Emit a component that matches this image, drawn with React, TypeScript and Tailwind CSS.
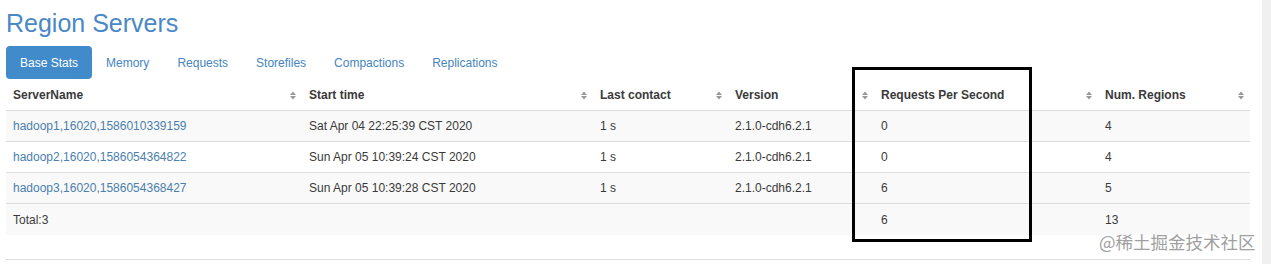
// Region Servers — HBase master UI, "Base Stats" tab with sortable table.
import React from "react";

const tabs = ["Base Stats", "Memory", "Requests", "Storefiles", "Compactions", "Replications"];

const columns = ["ServerName", "Start time", "Last contact", "Version", "Requests Per Second", "Num. Regions"];

const rows = [
  ["hadoop1,16020,1586010339159", "Sat Apr 04 22:25:39 CST 2020", "1 s", "2.1.0-cdh6.2.1", "0", "4"],
  ["hadoop2,16020,1586054364822", "Sun Apr 05 10:39:24 CST 2020", "1 s", "2.1.0-cdh6.2.1", "0", "4"],
  ["hadoop3,16020,1586054368427", "Sun Apr 05 10:39:28 CST 2020", "1 s", "2.1.0-cdh6.2.1", "6", "5"],
];

const grid = "grid grid-cols-[296px_291px_135px_146px_224px_152px]";

function SortIcon() {
  return (
    <svg width="6" height="9" viewBox="0 0 6 9" className="shrink-0">
      <polygon points="0,4 3,0.5 6,4" fill="#9a9a9a" />
      <polygon points="0,5 3,8.5 6,5" fill="#9a9a9a" />
    </svg>
  );
}

export default function App() {
  return (
    <div className="flex h-[264px] w-[1271px] overflow-hidden bg-white font-['Liberation_Sans',Arial,sans-serif] text-[12px] text-[#3a3a3a]">
      <div className="relative flex-1 pl-[6px]">
        <h1 className="mt-[8px] text-[25px] leading-[30px] text-[#4a88c6]">Region Servers</h1>

        <ul className="mt-[8px] flex">
          {tabs.map((t, i) => (
            <li
              key={t}
              className={`flex h-[33px] items-center rounded-[4px] px-[14px] ${
                i === 0 ? "bg-[#428bca] text-white" : "text-[#4585c0]"
              }`}
            >
              {t}
            </li>
          ))}
        </ul>

        <div className="mt-[1px] w-[1244px]">
          <div className={`${grid} h-[31px] border-b border-[#ddd] font-bold`}>
            {columns.map(c => (
              <div key={c} className="flex items-center justify-between pl-[7px] pr-[6px]">
                <span>{c}</span>
                <SortIcon />
              </div>
            ))}
          </div>
          {rows.map((r, i) => (
            <div
              key={r[0]}
              className={`${grid} h-[31px] border-b border-[#ddd] ${i % 2 === 0 ? "bg-[#f9f9f9]" : "bg-white"}`}
            >
              {r.map((v, j) => (
                <div key={j} className={`flex items-center pl-[7px] ${j === 0 ? "text-[#4a7fae]" : ""}`}>
                  {v}
                </div>
              ))}
            </div>
          ))}
          <div className={`${grid} h-[31px] bg-[#f9f9f9]`}>
            <div className="flex items-center pl-[7px]">Total:3</div>
            <div />
            <div />
            <div />
            <div className="flex items-center pl-[7px]">6</div>
            <div className="flex items-center pl-[7px]">13</div>
          </div>
          <div className="mt-[24px] border-b border-[#ddd]" />
        </div>

        {/* annotation box drawn over the RPS column */}
        <div className="absolute left-[852px] top-[67px] h-[175px] w-[180px] border-[3px] border-black" />

        <div className="absolute left-[1099px] top-[232px] font-['Noto_Sans_CJK_SC',sans-serif] text-[17.5px] leading-[20px] text-[#a0a0a0]">
          @稀土掘金技术社区
        </div>
      </div>
      <div className="w-[9px] bg-[#f0f0f0]" />
    </div>
  );
}
